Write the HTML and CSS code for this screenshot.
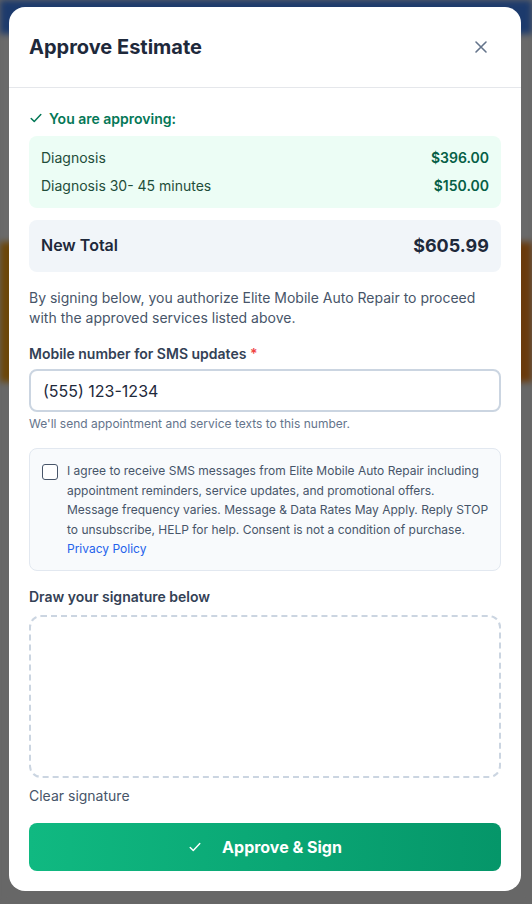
FILE: index.html
```html
<!DOCTYPE html>
<html>
  <head>
    <meta charset="utf-8">
    <title>Approve Estimate</title>
    <link rel="stylesheet" href="styles.css">
  </head>
<body>
<div class="backdrop">
  <div class="band band-top"></div>
  <div class="band band-gray"></div>
  <div class="band band-orange"></div>
  <div class="band band-gray2"></div>
</div>
<div class="overlay">
  <div class="modal">
    <div class="modal-head">
      <h2 class="modal-title">Approve Estimate</h2>
      <button class="close-btn" aria-label="Close">
        <svg width="16" height="16" viewBox="0 0 16 16" fill="none" stroke="#64748b" stroke-width="1.6" stroke-linecap="round"><path d="M3 3l10 10M13 3L3 13"/></svg>
      </button>
    </div>
    <div class="modal-body">
      <div class="approving">
        <svg width="14" height="14" viewBox="0 0 16 16" fill="none" stroke="#047857" stroke-width="1.7" stroke-linecap="round" stroke-linejoin="round"><path d="M2.5 8.5l3.5 3.5 7.5-8"/></svg>
        <span>You are approving:</span>
      </div>
      <div class="items">
        <div class="item-row"><span>Diagnosis</span><b>$396.00</b></div>
        <div class="item-row"><span>Diagnosis 30- 45 minutes</span><b>$150.00</b></div>
      </div>
      <div class="total">
        <span class="total-label">New Total</span>
        <span class="total-value">$605.99</span>
      </div>
      <p class="auth">By signing below, you authorize Elite Mobile Auto Repair to proceed with the approved services listed above.</p>
      <label class="field-label">Mobile number for SMS updates <span class="req">*</span></label>
      <input class="phone" type="text" value="(555) 123-1234">
      <div class="help">We'll send appointment and service texts to this number.</div>
      <div class="consent">
        <span class="check"></span>
        <p>I agree to receive SMS messages from Elite Mobile Auto Repair including<br>appointment reminders, service updates, and promotional offers.<br>Message frequency varies. Message &amp; Data Rates May Apply. Reply STOP<br>to unsubscribe, HELP for help. Consent is not a condition of purchase.<br><a href="#">Privacy Policy</a></p>
      </div>
      <div class="field-label sig-label">Draw your signature below</div>
      <div class="sig-pad"></div>
      <div class="clear-sig">Clear signature</div>
      <button class="approve-btn">
        <svg width="14" height="14" viewBox="0 0 16 16" fill="none" stroke="#fff" stroke-width="1.6" stroke-linecap="round" stroke-linejoin="round"><path d="M2.5 8.5l3.5 3.5 7.5-8"/></svg>
        <span>Approve &amp; Sign</span>
      </button>
    </div>
  </div>
</div>
</body>
</html>
```
FILE: styles.css
```css
body {
  margin: 0;
  padding: 0;
  font-family: Inter, "Noto Sans", sans-serif;
  background: #676767;
}
.backdrop {
  position: fixed;
  top: 0;
  left: 0;
  right: 0;
  bottom: 0;
  filter: blur(3px);
}
.band-top {
  height: 34px;
  background: #1c3a6c;
}
.band-gray {
  height: 208px;
  background: #6a6a6a;
}
.band-orange {
  height: 140px;
  background: linear-gradient(90deg, #6b4608, #6a3a0c);
}
.band-gray2 {
  height: 522px;
  background: #676767;
}
.overlay {
  position: relative;
  padding: 7px 0 0 9px;
}
.modal {
  width: 512px;
  background: #fff;
  border-radius: 16px;
  overflow: hidden;
}
.modal-head {
  display: flex;
  align-items: center;
  justify-content: space-between;
  height: 80px;
  padding: 0 24px 0 20px;
  border-bottom: 1px solid #e5e7eb;
}
.modal-title {
  margin: 0;
  font-size: 20px;
  font-weight: 700;
  color: #1e293b;
}
.close-btn {
  display: flex;
  align-items: center;
  justify-content: center;
  width: 32px;
  height: 32px;
  padding: 0;
  border: none;
  background: none;
  cursor: pointer;
}
.modal-body {
  padding: 20px;
}
.approving {
  display: flex;
  align-items: center;
  gap: 6px;
  height: 20px;
  font-size: 14px;
  font-weight: 600;
  color: #047857;
}
.items {
  margin-top: 8px;
  padding: 12px;
  background: #ecfdf5;
  border-radius: 8px;
  display: flex;
  flex-direction: column;
  gap: 8px;
}
.item-row {
  display: flex;
  justify-content: space-between;
  font-size: 14px;
  line-height: 20px;
}
.item-row span {
  color: #1f4d3a;
}
.item-row b {
  font-weight: 600;
  color: #065f46;
}
.total {
  margin-top: 12px;
  padding: 11px 12px 13px;
  background: #f1f5f9;
  border-radius: 8px;
  display: flex;
  justify-content: space-between;
  align-items: center;
  height: 28px;
}
.total-label {
  font-size: 16px;
  font-weight: 600;
  color: #1e293b;
}
.total-value {
  font-size: 18px;
  font-weight: 700;
  color: #1e293b;
}
.auth {
  margin: 16px 0 0;
  font-size: 14px;
  line-height: 20px;
  color: #475569;
}
.field-label {
  display: block;
  margin-top: 16px;
  font-size: 14px;
  line-height: 20px;
  font-weight: 600;
  color: #334155;
}
.req {
  color: #ef4444;
}
.phone {
  display: block;
  box-sizing: border-box;
  width: 100%;
  height: 43px;
  margin-top: 5px;
  padding: 0 12px;
  border: 2px solid #cbd5e1;
  border-radius: 8px;
  font-family: Inter, "Noto Sans", sans-serif;
  font-size: 16px;
  color: #1e293b;
  outline: none;
}
.help {
  margin-top: 4px;
  font-size: 12px;
  line-height: 16px;
  color: #64748b;
}
.consent {
  display: flex;
  gap: 9px;
  margin-top: 16px;
  padding: 12px 2px 11px 12px;
  background: #f8fafc;
  border: 1px solid #e2e8f0;
  border-radius: 8px;
}
.check {
  flex: none;
  width: 14px;
  height: 14px;
  margin-top: 3px;
  border: 1px solid #475569;
  border-radius: 3px;
  background: #fff;
}
.consent p {
  margin: 0;
  font-size: 12px;
  line-height: 19.5px;
  color: #475569;
}
.consent a {
  color: #2563eb;
  text-decoration: none;
}
.sig-label {
  margin-top: 16px;
}
.sig-pad {
  height: 159px;
  margin-top: 8px;
  border: 2px dashed #cbd5e1;
  border-radius: 12px;
}
.clear-sig {
  margin-top: 8px;
  font-size: 14px;
  line-height: 20px;
  color: #475569;
}
.approve-btn {
  display: flex;
  align-items: center;
  justify-content: center;
  gap: 20px;
  width: 100%;
  height: 48px;
  margin-top: 17px;
  border: none;
  border-radius: 8px;
  background: linear-gradient(90deg, #10b981, #059669);
  color: #fff;
  font-family: Inter, "Noto Sans", sans-serif;
  font-size: 16px;
  font-weight: 700;
  cursor: pointer;
}
```
